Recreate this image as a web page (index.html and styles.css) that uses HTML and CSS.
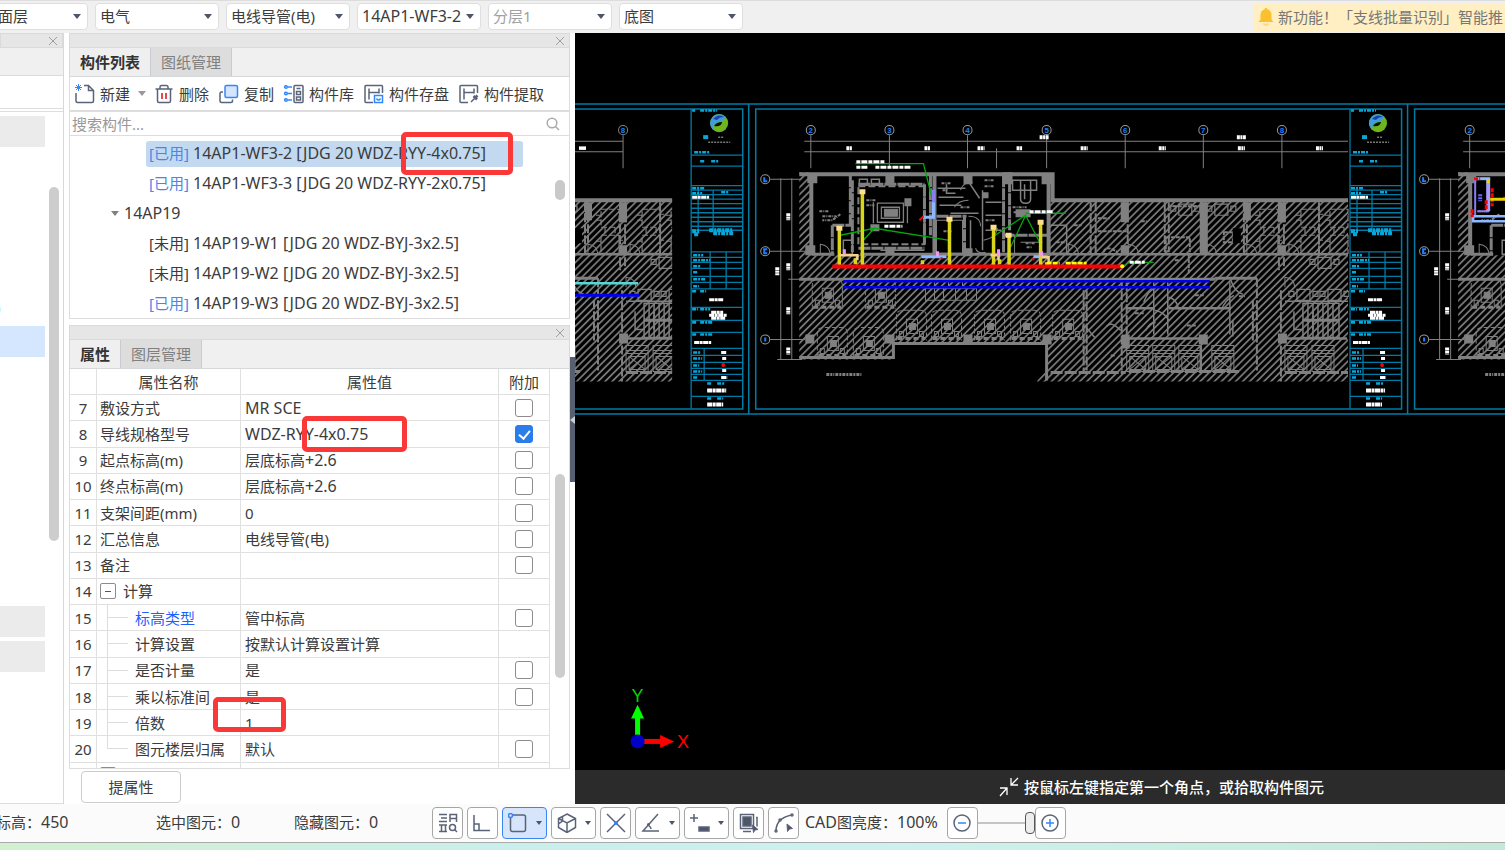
FILE: index.html
```html
<!DOCTYPE html>
<html lang="zh-CN">
<head>
<meta charset="utf-8">
<title>构件列表</title>
<link rel="stylesheet" href="styles.css">
</head>
<body>
<header class="topbar">
  <div class="filters">
    <label class="combo combo-first"><select aria-label="楼层"><option>面层</option></select></label>
    <label class="combo"><select aria-label="专业"><option>电气</option></select></label>
    <label class="combo"><select aria-label="构件类型"><option>电线导管(电)</option></select></label>
    <label class="combo combo-latin"><select aria-label="构件"><option>14AP1-WF3-2</option></select></label>
    <label class="combo combo-muted"><select aria-label="分层"><option>分层1</option></select></label>
    <label class="combo"><select aria-label="图纸"><option>底图</option></select></label>
  </div>
  <a class="notice" href="#">
    <svg width="16" height="20" viewBox="0 0 16 20"><path d="M8 1a1.5 1.5 0 0 1 1.5 1.4C12.300 3 13.500 5.200 13.500 8v4.500l2 2.500H.5l2-2.500V8c0-2.800 1.200-5 4-5.600A1.500 1.500 0 0 1 8 1z" fill="#fbc02d"/><path d="M5 16.500h6a3 2.500 0 0 1-6 0z" fill="#fddc7a"/></svg>
    <span>新功能！「支线批量识别」智能推</span>
  </a>
</header>

<main class="workspace">
  <aside class="side">
    <div class="panel-head"><button class="close" aria-label="关闭"><svg width="10" height="10" viewBox="0 0 10 10"><path d="M1 1l8 8M9 1l-8 8"/></svg></button></div>
    <div class="side-tabs"></div>
    <div class="side-tools"></div>
    <div class="side-body">
      <div class="side-list">
        <div class="side-group"></div>
        <div class="side-text">)</div>
        <div class="side-group side-active"></div>
        <div class="side-group side-later"></div>
        <div class="side-group"></div>
      </div>
      <div class="side-thumb"></div>
    </div>
  </aside>

  <section class="center">
    <div class="panel-head"><button class="close" aria-label="关闭"><svg width="10" height="10" viewBox="0 0 10 10"><path d="M1 1l8 8M9 1l-8 8"/></svg></button></div>
    <div class="tabs"><button class="tab tab-on">构件列表</button><button class="tab">图纸管理</button></div>
    <div class="tools">
      <button class="tool"><svg class="ico" viewBox="0 0 20 20"><path d="M9 1.500h4.500l5 5v10.500a1.500 1.500 0 0 1-1.500 1.500H2.500A1.500 1.500 0 0 1 1 17V9M13.500 1.500v5h5"/><path class="blue thin" d="M0 3.500h7M3.500 0v7M1 1l5 5M6 1L1 6"/></svg>新建<i class="arrow arrow-soft"></i></button>
      <button class="tool"><svg class="ico" viewBox="0 0 20 20"><path d="M1.500 5h17M6 5V3a1.500 1.500 0 0 1 1.500-1.500h5A1.500 1.500 0 0 1 14 3v2M3.500 5v12A1.500 1.500 0 0 0 5 18.500h10a1.500 1.500 0 0 0 1.500-1.500V5"/><path class="red" d="M8 9v6M12 9v6"/></svg>删除</button>
      <button class="tool"><svg class="ico" viewBox="0 0 20 20"><path d="M4 8H2.500A1.500 1.500 0 0 0 1 9.500V17a1.500 1.500 0 0 0 1.500 1.500H12a1.500 1.500 0 0 0 1.500-1.500v-1.500"/><rect x="6" y="1.500" width="12.500" height="12" rx="1.500" fill="#d3e5ff" stroke="#3a86f0"/></svg>复制</button>
      <button class="tool"><svg class="ico" viewBox="0 0 20 20"><rect x="10" y="1.500" width="9" height="17" rx="1"/><path d="M12.500 4.500h4M12.500 7.500h4v3h-4zM12.500 13h4v3h-4z"/><path class="blue" d="M0 3h2M4 3h4M0 9.500h2M4 9.500h4M0 16h2M4 16h4"/><g fill="#fff" class="blue"><circle cx="2" cy="3" r="1.300"/><circle cx="2" cy="9.500" r="1.300"/><circle cx="2" cy="16" r="1.300"/></g></svg>构件库</button>
      <button class="tool"><svg class="ico" viewBox="0 0 20 20"><path d="M18.500 9V2.500a1 1 0 0 0-1-1H2a1 1 0 0 0-1 1v15a1 1 0 0 0 1 1h7M5 15.500V4.500M5 8.500h10M15 4.500v5"/><path class="blue" d="M10.500 11.500h8v7h-8zM12.500 14.500q2 3 4 0"/></svg>构件存盘</button>
      <button class="tool"><svg class="ico" viewBox="0 0 20 20"><path d="M18.500 9V2.500a1 1 0 0 0-1-1H2a1 1 0 0 0-1 1v15a1 1 0 0 0 1 1h7M5 15.500V4.500M5 8.500h10M15 4.500v5M12 18l4-4"/><path d="M14.500 12l3.500 3.500M16.500 13.500l2-2" stroke-width="2.500"/></svg>构件提取</button>
    </div>
    <div class="search"><input type="text" aria-label="搜索构件" placeholder="搜索构件..."><svg width="14" height="14" viewBox="0 0 14 14"><circle cx="6" cy="6" r="4.800"/><path d="M9.500 9.500l3.500 3.500"/></svg></div>
    <div class="tree">
      <ul class="tree-list">
        <li class="leaf picked"><b>[已用]</b> 14AP1-WF3-2 [JDG 20 WDZ-RYY-4x0.75]</li>
        <li class="leaf"><b>[已用]</b> 14AP1-WF3-3 [JDG 20 WDZ-RYY-2x0.75]</li>
        <li class="branch"><i class="arrow arrow-tree"></i>14AP19</li>
        <li class="leaf"><b class="unused">[未用]</b> 14AP19-W1 [JDG 20 WDZ-BYJ-3x2.5]</li>
        <li class="leaf"><b class="unused">[未用]</b> 14AP19-W2 [JDG 20 WDZ-BYJ-3x2.5]</li>
        <li class="leaf"><b>[已用]</b> 14AP19-W3 [JDG 20 WDZ-BYJ-3x2.5]</li>
      </ul>
      <div class="tree-thumb"></div>
    </div>

    <div class="panel-head panel-second"><button class="close" aria-label="关闭"><svg width="10" height="10" viewBox="0 0 10 10"><path d="M1 1l8 8M9 1l-8 8"/></svg></button></div>
    <div class="tabs"><button class="tab tab-on">属性</button><button class="tab">图层管理</button></div>
    <div class="props">
      <table class="grid">
        <colgroup><col class="c-num"><col class="c-name"><col><col class="c-add"></colgroup>
        <thead><tr><th></th><th>属性名称</th><th>属性值</th><th>附加</th></tr></thead>
        <tbody>
          <tr><td>7</td><td>敷设方式</td><td class="latin">MR SCE</td><td><input type="checkbox" aria-label="敷设方式"></td></tr>
          <tr><td>8</td><td>导线规格型号</td><td class="latin">WDZ-RYY-4x0.75</td><td><input type="checkbox" checked aria-label="导线规格型号"></td></tr>
          <tr><td>9</td><td>起点标高(m)</td><td>层底标高<span class="latin">+2.6</span></td><td><input type="checkbox" aria-label="起点标高"></td></tr>
          <tr><td>10</td><td>终点标高(m)</td><td>层底标高<span class="latin">+2.6</span></td><td><input type="checkbox" aria-label="终点标高"></td></tr>
          <tr><td>11</td><td>支架间距(mm)</td><td>0</td><td><input type="checkbox" aria-label="支架间距"></td></tr>
          <tr><td>12</td><td>汇总信息</td><td>电线导管(电)</td><td><input type="checkbox" aria-label="汇总信息"></td></tr>
          <tr><td>13</td><td>备注</td><td></td><td><input type="checkbox" aria-label="备注"></td></tr>
          <tr><td>14</td><td><div class="group"><button class="fold" aria-label="折叠"></button>计算</div></td><td></td><td></td></tr>
          <tr><td>15</td><td class="child"><a href="#">标高类型</a></td><td>管中标高</td><td><input type="checkbox" aria-label="标高类型"></td></tr>
          <tr><td>16</td><td class="child">计算设置</td><td>按默认计算设置计算</td><td></td></tr>
          <tr><td>17</td><td class="child">是否计量</td><td>是</td><td><input type="checkbox" aria-label="是否计量"></td></tr>
          <tr><td>18</td><td class="child">乘以标准间</td><td>是</td><td><input type="checkbox" aria-label="乘以标准间"></td></tr>
          <tr><td>19</td><td class="child">倍数</td><td>1</td><td></td></tr>
          <tr><td>20</td><td class="child child-last">图元楼层归属</td><td>默认</td><td><input type="checkbox" aria-label="图元楼层归属"></td></tr>
          <tr><td></td><td><div class="group"><button class="fold" aria-label="折叠"></button></div></td><td></td><td></td></tr>
        </tbody>
      </table>
      <div class="props-thumb"></div>
    </div>
    <div class="actions"><button class="extract">提属性</button></div>
    <div class="mark mark-tree"></div>
    <div class="mark mark-spec"></div>
    <div class="mark mark-times"></div>
  </section>

  <div class="splitter"><button aria-label="收起"><svg width="5" height="8" viewBox="0 0 5 8"><path d="M5 0v8L0 4z" fill="#c8ced6"/></svg></button></div>

  <section class="stage">
    <svg class="drawing" viewBox="575 33 930 770" preserveAspectRatio="xMinYMin slice">
      <defs>
        <pattern id="hatch" width="5" height="5" patternUnits="userSpaceOnUse" patternTransform="rotate(45)"><path d="M2.500 0v5" stroke="#787878" stroke-width="1.800"/></pattern>
        <clipPath id="leftclip"><path d="M1200 100h130v320h-130z"/></clipPath>
        <clipPath id="sheetclip"><path d="M750 100h598v320h-598z"/></clipPath>
        <g id="desk" fill="none" stroke="#808080"><path d="M0 30V6q0-6 6-6h18q6 0 6 6v24" stroke-dasharray="5 2"/><path d="M1 28h28" stroke-width="3" stroke-dasharray="5 3"/><path d="M10 9h11v14H10z"/><path d="M13 13h6v6h-6z" fill="#808080"/><path d="M3 21h4v5H3zM23 21h4v5h-4z"/></g>
        <g id="lift" fill="none" stroke="#808080"><path d="M0 0h22v26H0zM0 5h22M0 8h22M3 11h16v13H3zM3 11l16 13M19 11L3 24"/></g>
        <g id="seats" fill="none" stroke="#808080" stroke-width="1.200"><path d="M0 2h5v5H0zM8 0h13v11H8zM24 2h5v5h-5z"/></g>
        <g id="table" fill="none" stroke="#808080" stroke-width="1.200"><path d="M0 0h18v18H0zM0 26h18v18H0zM-5 6h5M-5 11h5M18 5h4M18 31h4M-5 32h5M4 18v8M14 18v8" stroke-dasharray="6 2"/></g>
        <g id="door" fill="none" stroke="#808080"><path d="M0 10V0q9 1 10 10"/></g>
        <g id="logo"><circle r="9" fill="#6fb51c"/><path d="M-3-8.500A9 9 0 0 0-6 6.700Q-6 0 0-1 5-2 6-6.700 2-10-3-8.500z" fill="#3f9ed8"/><path d="M-6-4q5-6 11-2-5 0-7 3z" fill="#1d3fae"/><path d="M-5 3q2-4 8-4Q2 4-5 3z" fill="#06120a"/></g>
        <g id="titleblock" fill="none" stroke="#007ba6" stroke-width="1.300">
          <path d="M1349 109v299M1349 155h51M1349 166h51M1349 185.500h51M1349 190h51M1349 194.500h51M1349 199h51M1349 203.500h51M1349 208h51M1349 212.500h51M1349 217h51M1349 221.500h51M1349 226h51M1349 230h51M1356 187v43M1371 190v40M1349 251.500h51M1349 257h51M1349 262h51M1349 268h51M1349 276h51M1349 282h51M1349 288.500h51M1368 252v36M1384 252v36M1349 307h51M1349 320h51M1349 332h51M1349 348h51M1349 355h51M1349 362h51M1349 368h51M1349 374h51M1362 348v32M1349 380h51M1349 396h51"/>
          <g stroke="#09a6d8" stroke-width="2.500" stroke-dasharray="4 1 2 1"><path d="M1350 110.500h3M1358 110.500h17M1352 152h15M1358 161h5M1369 161h7M1350 188h13M1350 193h10M1379 192h8M1351 255h10M1351 260h17M1351 266h8M1351 272h5M1351 279h13M1351 286h6M1350 291h4M1358 291h6M1350 309h6M1358 309h10M1350 322h5M1358 322h13M1350 334h5M1358 334h13M1351 352h7M1351 358h9M1351 365h6M1351 371h9M1351 377h5M1365 383h4M1375 383h8M1365 398h4M1375 398h6"/><path d="M1350 231h8M1367 230h24M1352 234h5M1371 233h20" stroke-width="4"/></g>
          <path d="M1361 137h5" stroke="#09a6d8" stroke-width="4"/>
          <path d="M1376 137h6M1366 142h22" stroke="#777" stroke-width="1.500" stroke-dasharray="2 1"/>
          <g stroke="#fff" stroke-width="3" stroke-dasharray="5 .5 3 .5"><path d="M1350 197h17M1367 299.500h14M1369 312h12M1367 315h18M1369 318h14M1352 342h17M1379 352h5M1380 358h4M1380 370h4M1379 377h6"/><path d="M1365 390h19M1365 404h16" stroke-width="4"/></g>
          <circle cx="1381" cy="364.500" r="1.300" fill="#f00" stroke="#f00"/>
        </g>
        <g id="frame">
          <path d="M748.500 104v309.500M755.500 109h645v299.500h-645z" fill="none" stroke="#007ba6" stroke-width="1.500"/>
          <use href="#titleblock"/><use href="#logo" x="1377" y="123"/>
        </g>
        <g id="axes" fill="none" stroke="#808080">
          <path d="M804 141h543M804 151.500h543M810.500 135v33M889 135v33M967 135v33M996 148v20M1046 135v33M1124.500 135v33M1202.500 135v33M1281 135v33M770 179h30M770 251h40M788 279h15M770 339h35M777 359h25M780.500 178v181M791.500 178v181"/>
          <g fill="#000" stroke="#999"><circle cx="810.500" cy="130" r="4.500"/><circle cx="889" cy="130" r="4.500"/><circle cx="967" cy="130" r="4.500"/><circle cx="1046" cy="130" r="4.500"/><circle cx="1124.500" cy="130" r="4.500"/><circle cx="1202.500" cy="130" r="4.500"/><circle cx="1281" cy="130" r="4.500"/><circle cx="765" cy="179" r="4.500"/><circle cx="765" cy="251" r="4.500"/><circle cx="765" cy="339" r="4.500"/></g>
          <g class="axis-no"><text x="810.500" y="133">2</text><text x="889" y="133">3</text><text x="967" y="133">4</text><text x="1046" y="133">5</text><text x="1124.500" y="133">6</text><text x="1202.500" y="133">7</text><text x="1281" y="133">8</text></g>
          <path d="M764 177v4h3M767 249h-3v4h3M765 337v4" stroke="#1b80ff" stroke-width="2"/>
          <g stroke="#fff" stroke-width="4" stroke-dasharray="3 .5 2 .5"><path d="M846 148h6M924 148h6M977 148h7M1016 148h6M1080 148h7M1158 148h7M1237 148h7M1315 148h7M1039 137h9M1236 137h9M788 213v7M788 263v7M777 267v8M788 307v7M788 347v7"/></g>
        </g>
        <g id="plan">
          <path d="M799 172h13v83h237v-55h298v181H1036l10-12v-26H893v16h-94z" fill="url(#hatch)"/>
          <g fill="none" stroke="#808080">
            <path d="M799 174h253v26h295" stroke-width="4"/>
            <path d="M1048 175v80M811 175v80M934 175v79" stroke-width="4"/>
            <path d="M812 254h22M860 254h188M799 279h45M844 279h370M1214 278h42M799 357h94V343h153M1046 343v37" stroke-width="3"/>
            <path d="M850 175v50M852 180v72M832 225h20M832 225v30M858 184h66M924 184v60M930 175v60M858 248h66M964 216v40M936 216h30M1003 175v80M1002 235h45M1009 180v50" stroke-width="3" stroke-dasharray="12 1"/>
            <path d="M1046 254h301M1128 338h72M1284 338h62M1126 308h28M1168 308h62M1200 345v25" stroke-width="2.500"/>
            <path d="M1090 202v52M1095 202v52M1127 202v52M1164 202v50M1168 202v50M1200 202v50M1205 202v50M1243 202v52M1246 202v40M1278 202v68M1283 202v68M1318 202v52M1252 300v40M1256 278v92M1280 290v91M1086 290v80M1083 290v80M1121 280v90M1126 282v54" stroke-width="2" stroke-dasharray="9 2"/>
            <path d="M1050 372h75M1128 371h110M1284 372h63" stroke-width="3" stroke-dasharray="12 2"/>
            <path d="M858 186h66v58h-66z" stroke-width="2" stroke-dasharray="7 3"/>
            <path d="M877 203h26v19h-26zM881 207h18v11h-18zM873 202v21M907 202v21" stroke-width="1.300"/><path d="M884 209h13v7h-13z" fill="#808080"/>
            <path d="M859 179h8v6h-8zM871 179h8v6h-8zM880 250h44M843 240h9v14h-9zM937 188h28M938 197h25M967 180l12 18M939 205h22M946 184v9h9M950 213h28M982 190v60M985 215h16M985 202h16M985 230h16M970 220v30M1012 180h24v10h-24zM1020 180v19q0 4 5 4t5-4v-19zM1024 184v15M1050 225h16v28h-16" stroke-width="1.500"/>
            <path d="M936 220h26v33h-26zM968 200q-10 0-14 7M968 216q12 0 12 10M983 240q12-2 14-12M960 190q2-8 12-8M975 248q2 6 10 4M1014 235v18M1020 242h22"/>
            <path d="M819 211h10M822 216h14M840 214l-8 6h-10M866 200h10M866 205h8M941 183h9M942 190h6M960 207h9M984 180h10M984 186h9M943 231h8M985 220h10M1025 243h9M1026 247h5M1012 207h14M1013 212h20" stroke-width="2" stroke-dasharray="3 1 1 1"/>
            <path d="M925 288h51v12h-51zM934 288v12M943 288v12M955 288v12M966 288v12M934 279v9M948 279v9M962 279v9"/>
            <path d="M1302 303h36v34h-36zM1293 311v18h9M1307 303v34M1312 303v34M1317 303v34M1322 303v34M1327 303v34M1332 303v34M1284 301h63" stroke-width="1.500"/><path d="M1302 320h36" stroke-width="3"/>
            <path d="M1143 302q4-12 12-14M1168 297q8 2 10 12M1168 320q-4-8-14-10M1230 280q4 12 12 14M1221 309q2-8 12-14M1153 282v52M1167 282v52M1229 282v52M1232 320v16M1145 330q4-8 10-8M1120 330q-10-10-14-4M1084 325l10 12" stroke-width="1.500"/>
            <path d="M1097 218h12M1097 231h30M1103 252q2-8 14 0M1073 225h8M1055 242h9M1140 221h6M1172 206h24M1165 237h24v17h-24zM1188 254v20M1223 232h9v10h-9zM1312 310v20M1194 295h10M1134 313h10M1186 325h9M1238 296h6M1174 260h4M1110 355h5" stroke-width="2" stroke-dasharray="4 1"/>
            <path d="M826 374h8M835 374h26" stroke-width="3" stroke-dasharray="3 1 2 1"/>
          </g>
          <path d="M1232 228h8v15h-8z" fill="#000"/>
          <g fill="#808080"><path d="M807 175h10v8h-10zM805 245h10v10h-10zM885 175h9v8h-9zM885 248h9v6h-9zM963 175h9v9h-9zM963 248h9v8h-9zM1002 172h10v12h-10zM1041 174h10v10h-10zM805 334h9v9h-9zM884 334h10v9h-10zM963 334h9v9h-9zM1042 334h9v10h-9zM1121 334h8v14h-8zM1198 334h9v10h-9zM1277 333h9v10h-9zM1120 202h8v20h-8zM1120 245h8v10h-8zM1199 202h8v52h-8zM1277 202h8v20h-8zM1277 245h8v10h-8zM1243 202h7v18h-7zM904 198h7v8h-7zM870 224h9v7h-9zM1015 209h15v8h-15zM982 192h6v6h-6z"/></g>
          <use href="#desk" x="812" y="279"/><use href="#desk" x="865" y="279"/><use href="#desk" x="817" y="327"/><use href="#desk" x="853" y="327"/>
          <use href="#desk" x="896" y="310"/><use href="#desk" x="931" y="310"/><use href="#desk" x="974" y="310"/><use href="#desk" x="1010" y="310"/><use href="#desk" x="1052" y="310"/>
          <use href="#lift" x="1126" y="345"/><use href="#lift" x="1152" y="345"/><use href="#lift" x="1178" y="345"/><use href="#lift" x="1211" y="345"/><use href="#lift" x="1284" y="345"/><use href="#lift" x="1311" y="345"/>
          <use href="#seats" x="1170" y="204"/><use href="#seats" x="1206" y="204"/><use href="#seats" x="1309" y="257"/><use href="#seats" x="1288" y="289"/><use href="#seats" x="1319" y="289"/>
          <use href="#table" x="1259" y="209"/><use href="#table" x="1300" y="209"/><use href="#table" x="1329" y="209"/>
          <use href="#door" x="1068" y="244"/><use href="#door" x="1128" y="244"/><use href="#door" x="1206" y="244"/><use href="#door" x="1246" y="244"/><use href="#door" x="1288" y="244"/><use href="#door" x="820" y="244"/><use href="#door" x="1284" y="277"/>
        </g>
      </defs>

      <path d="M575 33h930v770h-930z" fill="#000"/>
      <path d="M575 104h930M575 413.500h930" stroke="#007ba6" stroke-width="1.500"/>
      <use href="#frame" x="-658"/><use href="#frame"/><use href="#frame" x="658"/>

      <g transform="translate(-658 0)"><g clip-path="url(#leftclip)"><use href="#plan"/></g></g>
      <g fill="none" stroke="#808080"><path d="M575 141h48M575 151.500h48M623 135v33"/><circle cx="623" cy="130" r="4.500" fill="#000"/><path d="M579 148h7" stroke="#fff" stroke-width="3.500"/></g>
      <g class="axis-no"><text x="623" y="133">8</text></g>
      <path d="M575 283h63" stroke="#57d6d6" stroke-width="2.500"/><path d="M575 295h64" stroke="#00e" stroke-width="3"/>

      <use href="#axes"/><g clip-path="url(#sheetclip)"><use href="#plan"/></g>
      <use href="#axes" x="658"/><use href="#plan" x="658"/>

      <g fill="none">
        <path d="M843 281h366M843 287h366" stroke="#00e" stroke-width="2.500"/>
        <g stroke="#00a80c" stroke-width="1.300"><path d="M855 163.500h68l10 40M840 235l34-7 75 12M874 228l-12 13M993 236l32-21 15 29M1025 215l-15 32M1025 213h40M1122 266l7-4h24"/></g>
        <g stroke="#fff" stroke-width="3" stroke-dasharray="4 1 6 1"><path d="M856 161.500h29M856 167h11M875 167h36M1029 211.500h24M1129 262h15M884 226h18"/></g>
        <path d="M933 190v27h-10M921 256.500h25M1033 256.500h14" stroke="#8db8ff" stroke-width="3"/>
        <path d="M933 190v12" stroke="#8a7bef" stroke-width="3"/>
        <g stroke="#d9d51b" stroke-width="3.500"><path d="M839 230v35M862 192v73M949 220v45M993 228v37M1008.500 236v29M1040 222v43M855 258v6M922 260v4M999 259v5M1046 262v3"/></g>
        <g stroke="#ffe08a" stroke-width="5"><path d="M836 228h6M859 191.500h6M946 219h6M990 227h6M1005 235h6M1037 222h6"/></g>
        <path d="M839 255h18v5M990 255h8v5M1041 257h7v6" stroke="#f6cf8b" stroke-width="2.500"/>
        <path d="M844 249v5M937 251v5M998 249v7M1041 251v5" stroke="#f396f4" stroke-width="3"/>
        <path d="M1046 263h13M1065 263h21" stroke="#ff0" stroke-width="3" stroke-dasharray="5 1"/>
        <path d="M832 266.300h290" stroke="#f00" stroke-width="4"/>
        <path d="M919 220l4-4M940 258h2M1031 259h3" stroke="#d11" stroke-width="2"/>
        <circle cx="1121.500" cy="266" r="2" fill="#ff0"/>
        <path d="M1474 179v38M1476 211h12" stroke="#8a7bef" stroke-width="2"/><path d="M1487 179v32" stroke="#a79cff" stroke-width="4"/>
        <path d="M1474 178.500h15" stroke="#8db8ff" stroke-width="3"/><path d="M1505 216h-33v5h33" stroke="#8db8ff" stroke-width="2.500"/>
        <path d="M1473 178.500h6M1485 200v10M1491 188v18M1471 209v8M1502 198h3" stroke="#f00" stroke-width="3" stroke-dasharray="4 1"/>
        <path d="M1487 179v4M1489 199h16" stroke="#e8d400" stroke-width="3"/>
        <path d="M1479 194v7" stroke="#66f" stroke-width="4" stroke-dasharray="2 1"/>
      </g>

      <path d="M637.500 734v-17" stroke="#0f0" stroke-width="5"/><path d="M637.500 704l6.500 13.500h-13z" fill="#0f0"/>
      <path d="M643 740.500h18" stroke="#f00" stroke-width="5"/><path d="M674 740.500l-14-6.500v13z" fill="#f00"/>
      <circle cx="637.500" cy="740.500" r="7" fill="#0000c8"/>
      <g class="axis-xy"><text x="637.500" y="701" fill="#00d800">Y</text><text x="683" y="747" fill="#f00">X</text></g>
    </svg>
    <div class="hint"><svg width="20" height="20" viewBox="0 0 20 20"><path d="M1 11h7v7M8 11l-7 8M12 1v7h7M12 8l7-7"/></svg><span>按鼠标左键指定第一个角点，或拾取构件图元</span></div>
  </section>
</main>

<footer class="status">
  <span class="stat stat-first">标高：<span class="latin">450</span></span>
  <span class="stat">选中图元：<span class="latin">0</span></span>
  <span class="stat">隐藏图元：<span class="latin">0</span></span>
  <div class="modes">
    <button aria-label="查找"><svg class="ico" viewBox="0 0 20 20"><path d="M1 1.500h8M3 5h6M1 8.500h8M12 9V1.500h6.500V9M12 5.500h6.500M1 12h8M3.500 12v6.500M7.500 12v6.500M1 18.500h8"/><circle cx="14.500" cy="14.500" r="3"/><path d="M16.500 16.500l2.500 2.500"/></svg></button>
    <button aria-label="正交"><svg class="ico" viewBox="0 0 20 20"><path d="M1 2v15.500h16M1 11h5v6"/></svg></button>
    <button class="wide active" aria-label="框选"><svg class="ico" viewBox="0 0 20 20"><rect x="2.500" y="2" width="15" height="16.500" rx="2"/><circle class="blue" cx="2.500" cy="2.500" r="2" fill="#d6e5fc"/></svg><i class="arrow"></i></button>
    <button class="wide" aria-label="视图"><svg class="ico" viewBox="0 0 20 20"><path d="M10 1l8.500 4.500v9L10 19.500l-8.500-5v-9zM1.500 5.500L10 10l8.500-4.500M10 10v9.500M5.500 3.500v4.500l-4 3"/></svg><i class="arrow"></i></button>
    <button aria-label="交点"><svg class="ico" viewBox="0 0 20 20"><path d="M1 1l18 18M19 1L1 19"/><circle class="blue" cx="10" cy="10" r="1.300" fill="#2f86ff"/></svg></button>
    <button class="wide" aria-label="角度"><svg class="ico" viewBox="0 0 20 20"><path d="M17 1L2 18h16M7 12q3 2 3 4"/><circle cx="7.500" cy="11.500" r=".8"/></svg><i class="arrow"></i></button>
    <button class="wide" aria-label="偏移"><svg class="ico" viewBox="0 0 20 20"><path d="M4 1v8M0 5h8"/><path d="M9 14h10v4H9z" fill="#4d5668"/></svg><i class="arrow"></i></button>
    <button aria-label="图层"><svg class="ico" viewBox="0 0 20 20"><path d="M1.500 1.500h13v14h-13z"/><path d="M4 4h8v9H4z" fill="#4d5668"/><path d="M17 4.500h1v9M4 18.500h8"/><path d="M13.500 12l5.500 4.500-3 .5-1.500 2.500z" fill="#4d5668" stroke-width="1"/></svg></button>
    <button aria-label="弧线"><svg class="ico" viewBox="0 0 20 20"><path d="M2 18Q2 5 18 2"/><circle cx="2" cy="18" r="1" fill="#fff"/><circle cx="6" cy="7" r="1" fill="#fff"/><circle cx="18" cy="2" r="1" fill="#fff"/><path d="M13 11l5.500 4.500-3 .5-2 2.500z" fill="#4d5668" stroke-width="1"/></svg></button>
  </div>
  <label class="light" for="light"><span class="latin">CAD</span>图亮度：<span class="latin">100%</span></label>
  <div class="zoomer">
    <button aria-label="减小"><svg class="ico" viewBox="0 0 20 20"><circle cx="10" cy="10" r="8"/><path class="blue" d="M6 10h8"/></svg></button>
    <input id="light" type="range" min="0" max="100" value="100">
    <button aria-label="增大"><svg class="ico" viewBox="0 0 20 20"><circle cx="10" cy="10" r="8"/><path class="blue" d="M6 10h8M10 6v8"/></svg></button>
  </div>
</footer>
<div class="desktop"></div>
</body>
</html>
```

FILE: styles.css
```css
* { box-sizing: border-box; }
body {
  margin: 0;
  height: 100vh;
  display: flex;
  flex-direction: column;
  overflow: hidden;
  background: #fff;
  color: #3c3c3c;
  font: 15px/20px "Noto Sans", "Noto Sans CJK SC", sans-serif;
}
button, input, select { font: inherit; color: inherit; }
button { padding: 0; border: 0; background: none; }

.ico { width: 20px; height: 20px; flex: none; fill: none; stroke: #5a6377; stroke-width: 1.5; }
.ico .blue { stroke: #2f86ff; }
.ico .thin { stroke-width: 1; }
.ico .red { stroke: #e5484d; stroke-width: 2; }
.arrow { border: 4px solid transparent; border-top: 5px solid #4d5668; border-bottom: 0; flex: none; }
.latin { font-size: 16px; }

/* top bar */
.topbar {
  display: flex;
  flex: none;
  height: 33px;
  padding-top: 2px;
  border-top: 1px solid #ddd;
  background: #f0f0f0;
}
.filters { display: flex; gap: 7px; margin-left: -36px; }
.combo { position: relative; width: 124px; height: 27px; }
.combo::after {
  content: "";
  position: absolute;
  right: 7px;
  top: 11px;
  border: 4px solid transparent;
  border-top: 5px solid #4d5668;
  border-bottom: 0;
}
.combo select {
  appearance: none;
  display: block;
  width: 100%;
  height: 27px;
  padding: 0 4px 2px;
  border: 1px solid #dedede;
  border-radius: 4px;
  background: #fff;
}
.combo-first select { padding-left: 33px; }
.combo-latin select { font-size: 16px; }
.combo-muted select { color: #a0a0a0; }
.notice {
  display: flex;
  align-items: center;
  gap: 4px;
  width: 252px;
  height: 29px;
  margin-left: auto;
  padding: 0 0 1px 5px;
  overflow: hidden;
  white-space: nowrap;
  border-radius: 4px 0 0 4px;
  background: #ffefc2;
  color: #777;
  text-decoration: none;
}
.notice svg, .notice span { flex: none; }

/* workspace */
.workspace { display: flex; flex: 1; min-height: 0; }
.panel-head {
  display: flex;
  flex: none;
  justify-content: flex-end;
  align-items: center;
  height: 15px;
  padding-right: 4px;
  border: 1px solid #dadada;
  background: #e6e6e6;
}
.close { display: flex; }
.close svg { stroke: #a0a0a0; fill: none; }

.side { display: flex; flex-direction: column; width: 64px; margin-right: 5px; border-right: 1px solid #d8d8d8; }
.side-tabs { flex: none; height: 28px; background: #f0f0f0; border-bottom: 1px solid #dcdcdc; }
.side-tools { flex: none; height: 33px; border-bottom: 1px solid #ddd; }
.side-body { display: flex; flex: 1; justify-content: space-between; margin-top: 2px; padding-right: 4px; border: solid #ddd; border-width: 1px 0; }
.side-list { display: flex; flex-direction: column; gap: 4px; width: 45px; padding-top: 4px; }
.side-group { height: 31px; background: #ebebeb; }
.side-text { height: 20px; margin-top: 146px; text-indent: -4px; color: #2f86ff; overflow: hidden; }
.side-active { margin-top: 5px; background: #d4e7fe; }
.side-later { margin-top: 245px; }
.side-thumb { width: 10px; height: 354px; margin-top: 75px; border-radius: 5px; background: #cdcdcd; }

.center { position: relative; display: flex; flex-direction: column; width: 501px; }
.tabs { display: flex; flex: none; height: 29px; background: #f0f0f0; border: solid #d6d9dc; border-width: 0 1px 1px; }
.tab { padding: 0 10px; background: #ddd; color: #808080; border: solid #c8ccd0; border-width: 0 1px; }
.tab-on { background: #efefef; color: #333; font-weight: 700; border-width: 0; }
.tools { display: flex; flex: none; align-items: center; gap: 10px; height: 34px; padding-left: 5px; border: 1px solid #ddd; border-top: 0; }
.tool { display: flex; align-items: center; gap: 5px; white-space: nowrap; }
.arrow-soft { margin: 0 -2px 0 3px; border-top-color: #999; }
.search { display: flex; flex: none; align-items: center; height: 25px; padding: 0 9px 0 2px; border: 1px solid #ddd; }
.search input { flex: 1; min-width: 0; height: 22px; padding: 0; border: 0; outline: 0; }
.search input::placeholder { color: #999; opacity: 1; }
.search svg { fill: none; stroke: #aaa; stroke-width: 1.5; }
.tree { display: flex; flex: none; justify-content: space-between; height: 183px; padding: 3px 4px 0 45px; border: solid #ddd; border-width: 0 1px 1px; }
.tree-list { margin: 0; padding: 0; list-style: none; }
.tree-list li { display: flex; align-items: center; height: 30px; padding-bottom: 2px; white-space: pre; font-size: 16px; }
.tree-list b { font-size: 15px; font-weight: 400; color: #4a86e8; }
.tree-list .unused { color: inherit; }
.tree-list .leaf { margin-left: 31px; padding-left: 3px; }
.tree-list .picked { width: 377px; border-radius: 4px; background: #c2d9f0; border: solid #fff; border-width: 2px 0; }
.arrow-tree { margin: 0 5px 0 -4px; border-top-color: #808080; }
.tree-thumb { width: 10px; height: 20px; margin-top: 41px; border-radius: 5px; background: #c9c9c9; }
.panel-second { margin-top: 6px; }

/* property grid */
.props { display: flex; flex: 1; min-height: 0; justify-content: space-between; overflow: hidden; padding-right: 4px; border: 1px solid #ddd; border-top: 0; }
.grid { width: 480px; height: 420px; table-layout: fixed; border-collapse: separate; border-spacing: 0; }
.c-num { width: 27px; }
.c-name { width: 144px; }
.c-add { width: 51px; }
.grid th, .grid td { height: 26px; padding: 0 3px; border: solid #e0e0e0; border-width: 0 1px 1px 0; font-weight: 400; text-align: left; white-space: nowrap; overflow: hidden; line-height: 20px; }
.grid th, .grid td:first-child, .grid td:last-child { text-align: center; }
.grid td:nth-child(3) { padding-left: 4px; }
.grid td:first-child { padding: 0; }
.grid a { color: #1f5eff; text-decoration: none; }
.grid .child { padding-left: 38px; background: linear-gradient(#ddd, #ddd) 10px 0 / 1px 100% no-repeat, linear-gradient(#ddd, #ddd) 10px 12px / 21px 1px no-repeat; }
.grid .child-last { background-size: 1px 12px, 21px 1px; }
.grid input {
  appearance: none;
  display: block;
  width: 18px;
  height: 18px;
  margin: 0 auto;
  border: 1px solid #8c8c8c;
  border-radius: 3px;
  background: #fff;
}
.grid input:checked { border-color: #2b7de9; background: #2b7de9; }
.grid input:checked::after { content: ""; display: block; width: 5px; height: 9px; margin: 2px 0 0 5px; border: solid #fff; border-width: 0 2px 2px 0; transform: rotate(40deg); }
.group { display: flex; align-items: center; gap: 7px; }
.fold { display: flex; align-items: center; justify-content: center; width: 16px; height: 16px; border: 1px solid #8c8c8c; border-radius: 2px; }
.fold::before { content: ""; width: 6px; height: 1px; background: #555; }
.props-thumb { width: 10px; height: 204px; margin-top: 105px; border-radius: 5px; background: #cdcdcd; }
.actions { flex: none; height: 35px; padding: 2px 0 0 12px; }
.extract { width: 100px; height: 32px; border: 1px solid #ccc; border-radius: 4px; background: #fff; }

.mark { position: absolute; border: 5px solid #fb3838; border-radius: 5px; }
.mark-tree { left: 332px; top: 99px; width: 112px; height: 43px; }
.mark-spec { left: 233px; top: 383px; width: 105px; height: 36px; }
.mark-times { left: 144px; top: 664px; width: 73px; height: 35px; }

.splitter { width: 5px; padding-top: 324px; }
.splitter button { display: flex; align-items: center; width: 5px; height: 125px; background: #566070; }

/* drawing area */
.stage { position: relative; flex: 1; min-width: 0; overflow: hidden; background: #000; }
.drawing { display: block; width: 100%; height: 100%; }
.axis-no { fill: #1b80ff; stroke: none; font: 700 8px "Liberation Sans", sans-serif; text-anchor: middle; }
.axis-xy { font: 18px "Liberation Sans", sans-serif; text-anchor: middle; }
.hint {
  position: absolute;
  left: 0;
  right: 0;
  bottom: 0;
  display: flex;
  align-items: center;
  gap: 5px;
  height: 34px;
  padding-left: 424px;
  background: #2b2b2b;
  color: #fff;
  font-weight: 500;
}
.hint svg { fill: none; stroke: #fff; stroke-width: 1.3; }

/* status bar */
.status { display: flex; flex: none; align-items: center; height: 38px; background: #fbfbfb; white-space: nowrap; }
.stat { width: 138px; flex: none; padding-bottom: 2px; }
.stat-first { width: 160px; margin-left: -4px; }
.modes { display: flex; gap: 4px; }
.status button { display: flex; align-items: center; justify-content: center; gap: 8px; width: 31px; height: 32px; border: 1px solid #a6a6a6; border-radius: 4px; background: #fff; }
.status .wide { width: 45px; }
.status .wide .arrow { border-width: 4px 3px 0; }
.status .active { border-color: #3a86f0; background: #d6e5fc; }
.light { margin: 0 9px 0 6px; padding-bottom: 2px; }
.zoomer { display: flex; align-items: center; }
.zoomer input { appearance: none; width: 57px; height: 24px; margin: 0; background: linear-gradient(#c4c4c4, #c4c4c4) 0 11px / 100% 2px no-repeat; }
.zoomer input::-webkit-slider-thumb { appearance: none; width: 10px; height: 22px; border: 1px solid #555; border-radius: 4px; background: #eee; }
.desktop { flex: none; height: 8px; border-top: 1px solid #aaa; background: linear-gradient(90deg, #d2f0d0, #c8efec 35%, #cdf2ee 60%, #c4e9d8); }
```
